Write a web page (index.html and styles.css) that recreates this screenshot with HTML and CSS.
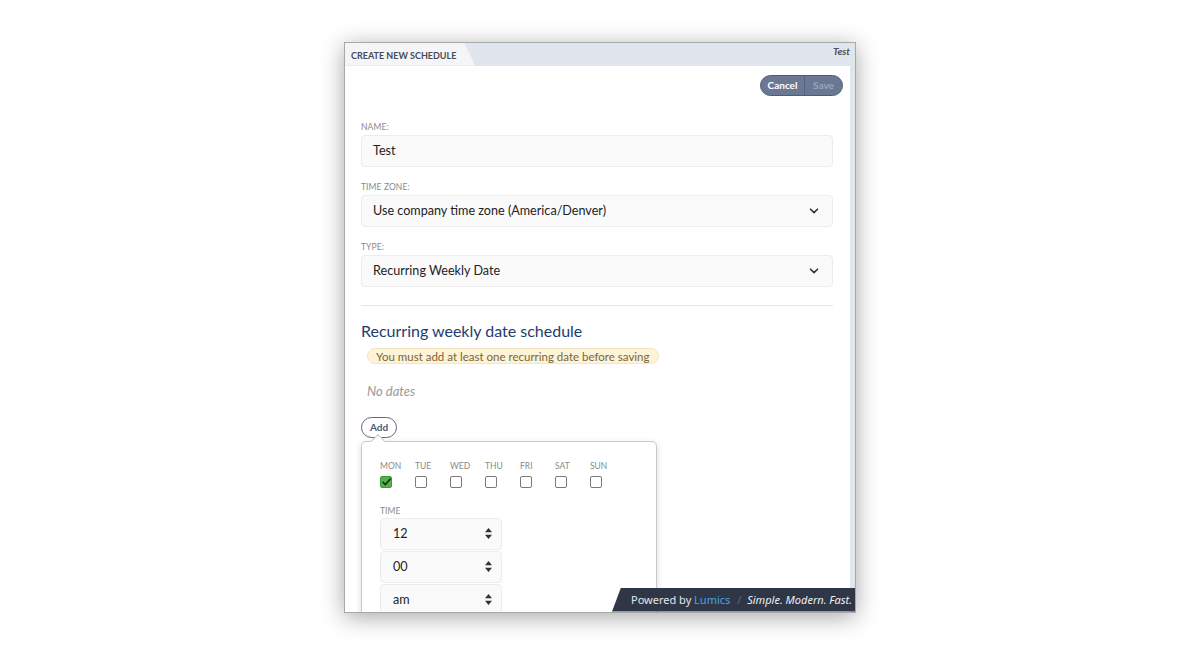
FILE: index.html
```html
<!DOCTYPE html>
<html lang="en">
  <head>
    <meta charset="UTF-8" />
    <title>Create New Schedule</title>
    <link rel="stylesheet" href="styles.css">
  </head>
  <body>
    <div class="window">
      <div class="window-header">
        <div class="tab">CREATE NEW SCHEDULE</div>
        <div class="record-name">Test</div>
      </div>

      <div class="window-body">
        <div class="content">
          <div class="toolbar">
            <div class="btn-group">
              <button class="btn-cancel">Cancel</button>
              <button class="btn-save">Save</button>
            </div>
          </div>

          <div class="form">
            <!-- Name -->
            <label class="field-label">Name:</label>
            <div class="input">Test</div>

            <!-- Time zone -->
            <label class="field-label">Time Zone:</label>
            <div class="input select">
              <span>Use company time zone (America/Denver)</span>
              <svg class="chevron" width="10" height="6" viewBox="0 0 10 6"><path d="M1.5 1.2 5 4.6 8.5 1.2" fill="none" stroke="#333" stroke-width="1.6" stroke-linecap="round" stroke-linejoin="round"/></svg>
            </div>

            <!-- Type -->
            <label class="field-label">Type:</label>
            <div class="input select">
              <span>Recurring Weekly Date</span>
              <svg class="chevron" width="10" height="6" viewBox="0 0 10 6"><path d="M1.5 1.2 5 4.6 8.5 1.2" fill="none" stroke="#333" stroke-width="1.6" stroke-linecap="round" stroke-linejoin="round"/></svg>
            </div>

            <hr class="divider" />

            <h3 class="section-title">Recurring weekly date schedule</h3>
            <div class="warning">You must add at least one recurring date before saving</div>
            <p class="empty">No dates</p>

            <button class="btn-add">Add</button>

            <div class="popover">
              <div class="days">
                <div class="day">
                  <span class="day-name">Mon</span>
                  <span class="check checked">
                    <svg width="9" height="8" viewBox="0 0 9 8"><path d="M1 4.2 3.4 6.6 8 1.2" fill="none" stroke="#1d2b12" stroke-width="1.6" stroke-linecap="round" stroke-linejoin="round"/></svg>
                  </span>
                </div>
                <div class="day"><span class="day-name">Tue</span><span class="check"></span></div>
                <div class="day"><span class="day-name">Wed</span><span class="check"></span></div>
                <div class="day"><span class="day-name">Thu</span><span class="check"></span></div>
                <div class="day"><span class="day-name">Fri</span><span class="check"></span></div>
                <div class="day"><span class="day-name">Sat</span><span class="check"></span></div>
                <div class="day"><span class="day-name">Sun</span><span class="check"></span></div>
              </div>

              <label class="field-label">Time</label>
              <div class="time-list">
                <div class="input spin">
                  <span>12</span>
                  <svg class="spinner" width="7" height="11" viewBox="0 0 7 11"><path d="M3.5 0 7 4.3H0Z M3.5 11 7 6.7H0Z" fill="#333"/></svg>
                </div>
                <div class="input spin">
                  <span>00</span>
                  <svg class="spinner" width="7" height="11" viewBox="0 0 7 11"><path d="M3.5 0 7 4.3H0Z M3.5 11 7 6.7H0Z" fill="#333"/></svg>
                </div>
                <div class="input spin">
                  <span>am</span>
                  <svg class="spinner" width="7" height="11" viewBox="0 0 7 11"><path d="M3.5 0 7 4.3H0Z M3.5 11 7 6.7H0Z" fill="#333"/></svg>
                </div>
              </div>
            </div>
          </div>
        </div>
      </div>

      <div class="powered">
        Powered by <span class="brand">Lumics</span>
        <span class="slash">/</span>
        <em>Simple. Modern. Fast.</em>
      </div>
    </div>
  </body>
</html>
```

FILE: styles.css
```css
body {
  margin: 0;
  height: 654px;
  background: #fff;
  font-family: "Noto Sans", Arial, sans-serif;
  display: flex;
  align-items: center;
  justify-content: center;
}

.window {
  position: relative;
  width: 510px;
  height: 569px;
  border: 1px solid #a8a8a8;
  background: #e1e6ee;
  box-shadow: 0 4px 22px rgba(0, 0, 0, 0.35);
  display: flex;
  flex-direction: column;
  overflow: hidden;
}

.window-header {
  height: 23px;
  display: flex;
  align-items: stretch;
  justify-content: space-between;
  flex-shrink: 0;
}

.tab {
  width: 130px;
  background: #f4f5f8;
  clip-path: polygon(0 0, 119px 0, 130px 100%, 0 100%);
  font-family: Lato, sans-serif;
  font-weight: 700;
  font-size: 9px;
  color: #464b55;
  line-height: 23px;
  padding-left: 6px;
  box-sizing: border-box;
  padding-top: 1px;
}

.record-name {
  font-family: Lato, sans-serif;
  font-style: italic;
  font-weight: 700;
  font-size: 10px;
  color: #4a4f58;
  padding: 2px 5px 0 0;
}

.window-body {
  flex: 1;
  padding-right: 5px;
  overflow: hidden;
}

.content {
  background: #fff;
  height: 100%;
  overflow: hidden;
}

.toolbar {
  display: flex;
  justify-content: flex-end;
  padding: 9px 7px 0 0;
}

.btn-group {
  display: flex;
  height: 21px;
  border: 1px solid #4f5c76;
  border-radius: 11px;
  background: #6b7894;
  overflow: hidden;
  box-sizing: border-box;
}

.btn-group button {
  border: none;
  background: none;
  font-family: Lato, sans-serif;
  font-weight: 700;
  font-size: 10px;
  padding: 0;
  cursor: pointer;
}

.btn-cancel {
  width: 44px;
  color: #fff;
  border-right: 1px solid #56637d !important;
}

.btn-save {
  width: 37px;
  color: #9ba6ba;
}

.form {
  padding: 25px 17px 0 16px;
  display: flex;
  flex-direction: column;
  align-items: flex-start;
}

.field-label {
  display: block;
  font-family: Lato, sans-serif;
  font-size: 8.5px;
  color: #8a8a8a;
  text-transform: uppercase;
  line-height: 12px;
  margin-bottom: 2px;
  letter-spacing: 0.1px;
}

.input {
  align-self: stretch;
  height: 32px;
  box-sizing: border-box;
  border: 1px solid #ececec;
  border-radius: 4px;
  background: #fafafa;
  display: flex;
  align-items: center;
  justify-content: space-between;
  padding: 0 12px 0 11px;
  font-family: Lato, sans-serif;
  font-size: 12.6px;
  color: #222;
  margin-bottom: 14px;
}

.chevron {
  margin-right: 1px;
}

.divider {
  align-self: stretch;
  border: none;
  border-top: 1px solid #e6e6e6;
  margin: 4px 0 0;
}

.section-title {
  font-family: Lato, sans-serif;
  font-weight: 400;
  font-size: 16px;
  color: #1e3d6e;
  margin: 14px 0 6px;
  line-height: 22px;
}

.warning {
  margin-left: 6px;
  height: 16px;
  line-height: 15px;
  box-sizing: border-box;
  padding: 0 8px;
  background: #fcf3d9;
  border: 1px solid #f3e6c0;
  border-radius: 8px;
  font-family: Lato, sans-serif;
  font-size: 11.5px;
  color: #7a6534;
}

.empty {
  margin: 18px 0 0 6px;
  font-family: Lato, sans-serif;
  font-size: 13px;
  font-style: italic;
  color: #999;
  line-height: 18px;
}

.btn-add {
  position: relative;
  margin-top: 17px;
  height: 21px;
  width: 36px;
  padding: 0;
  border: 1px solid #5b6782;
  border-radius: 11px;
  background: #fff;
  font-family: Lato, sans-serif;
  font-weight: 700;
  font-size: 10px;
  color: #4b5a7b;
}

.popover {
  position: relative;
  margin-top: 3px;
  width: 296px;
  box-sizing: border-box;
  border: 1px solid #c9c9c9;
  border-radius: 5px;
  background: #fff;
  box-shadow: 0 2px 6px rgba(0, 0, 0, 0.15);
  padding: 19px 18px 0;
}

/* caret pointing up into the Add button */
.popover::before {
  content: "";
  position: absolute;
  left: 11px;
  top: -6px;
  width: 9px;
  height: 9px;
  background: #fff;
  border-left: 1px solid #c9c9c9;
  border-top: 1px solid #c9c9c9;
  transform: rotate(45deg);
}

.days {
  display: flex;
  margin-bottom: 17px;
}

.day {
  width: 35px;
  display: flex;
  flex-direction: column;
  align-items: flex-start;
  gap: 4px;
}

.day-name {
  font-family: Lato, sans-serif;
  font-size: 8.5px;
  color: #8a8a8a;
  text-transform: uppercase;
  line-height: 11px;
}

.check {
  width: 12px;
  height: 12px;
  box-sizing: border-box;
  border: 1px solid #7a7a7a;
  border-radius: 2px;
  background: #fff;
  display: flex;
  align-items: center;
  justify-content: center;
}

.check.checked {
  background: #4fb34a;
  border-color: #3d9a39;
}

.popover .field-label {
  margin-bottom: 1px;
}

.time-list {
  width: 122px;
  display: flex;
  flex-direction: column;
  gap: 1px;
}

.time-list .input {
  margin-bottom: 0;
  padding: 0 9px 0 12px;
}

.powered {
  position: absolute;
  right: 0;
  bottom: 0;
  width: 243px;
  height: 24px;
  background: #2f3747;
  clip-path: polygon(9px 0, 100% 0, 100% 100%, 0 100%);
  box-sizing: border-box;
  padding-left: 19px;
  font-size: 11px;
  line-height: 24px;
  color: #e4e6ea;
  white-space: nowrap;
}

.brand {
  color: #4aa3e6;
}

.slash {
  color: #5d6576;
  margin: 0 3px 0 4px;
}

.powered em {
  color: #eef0f3;
}
```
